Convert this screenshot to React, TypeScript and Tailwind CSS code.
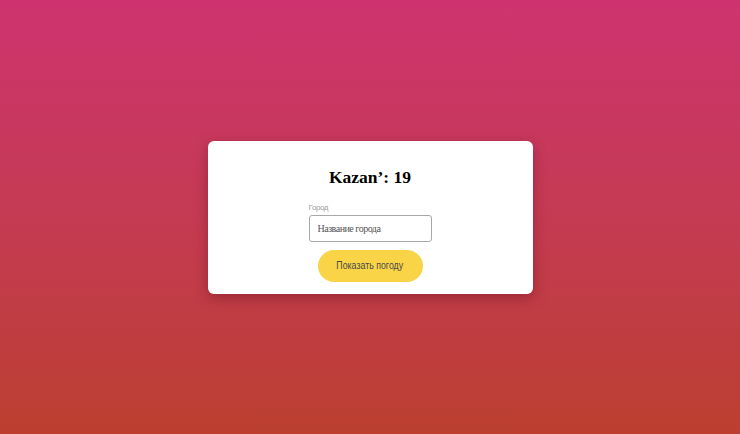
export default function App() {
  return (
    <div className="flex min-h-screen w-full items-center justify-center bg-gradient-to-b from-[#ce336f] to-[#bb3f2f]">
      <div className="flex w-[325px] flex-col items-center rounded-md bg-white pt-[22px] pb-[12px] shadow-[0_4px_14px_rgba(80,0,20,0.35)]">
        <h2 className="font-['Liberation_Serif',serif] text-[17.5px] font-bold leading-[28px] text-black">Kazan’: 19</h2>
        <div className="mt-[12px] flex w-[123px] flex-col">
          <label className="font-['Liberation_Sans',sans-serif] text-[8px] leading-[10px] tracking-[-0.4px] text-[#a0a0a0]">Город</label>
          <input
            placeholder="Название города"
            className="mt-[2px] h-[27px] w-[123px] rounded-[3px] border border-[#a8a8a8] px-[8px] font-['Liberation_Serif',serif] text-[10px] tracking-[-0.5px] text-[#444] placeholder:text-[#555] outline-none"
          />
        </div>
        <button className="mt-[8px] h-[32px] w-[105px] rounded-full bg-[#f9d447] font-['Liberation_Sans',sans-serif] text-[11px] text-[#4a4a4a]">
          <span className="inline-block scale-x-80 whitespace-nowrap">Показать погоду</span>
        </button>
      </div>
    </div>
  );
}
